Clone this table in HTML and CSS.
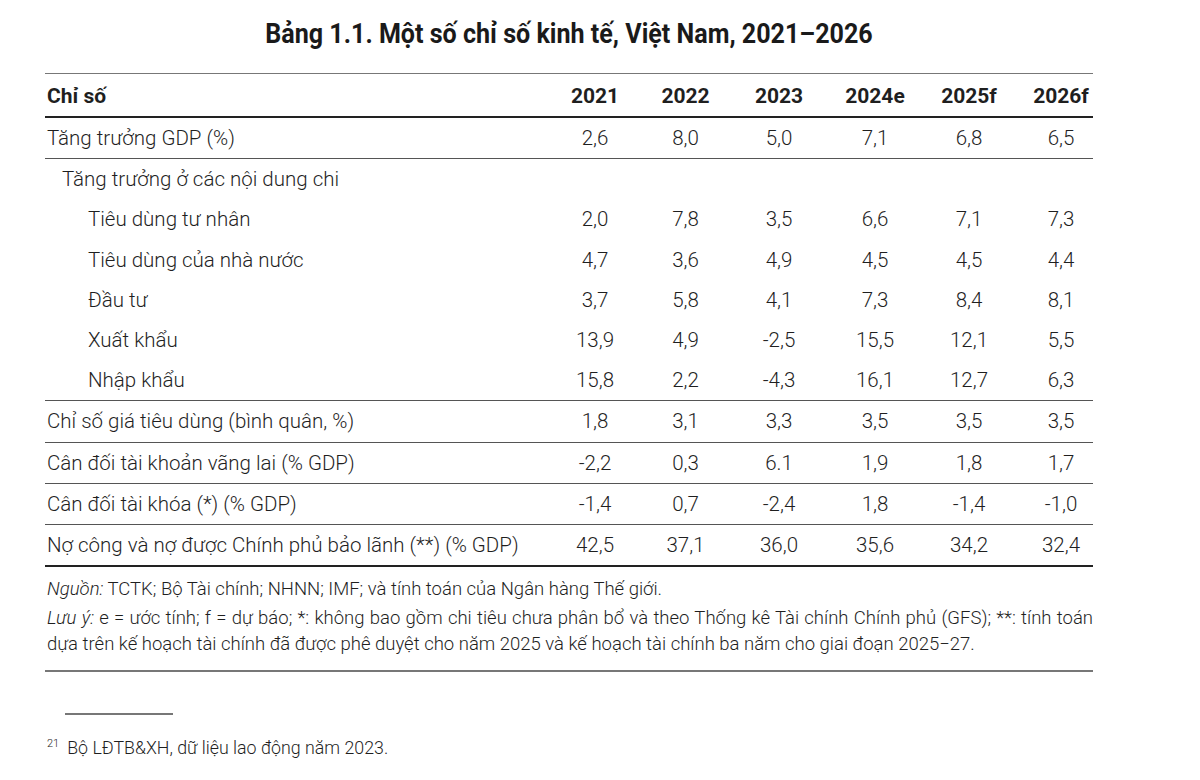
FILE: index.html
```html
<!DOCTYPE html>
<html lang="vi">
<head>
<meta charset="utf-8">
<link rel="stylesheet" href="styles.css">
</head>
<body>
<div class="page">
  <h1 class="title">Bảng 1.1. Một số chỉ số kinh tế, Việt Nam, 2021–2026</h1>
  <table class="data">
    <colgroup>
      <col class="c-label"><col class="c1"><col class="c2"><col class="c3"><col class="c4"><col class="c5"><col class="c6">
    </colgroup>
    <thead>
      <tr><th class="lbl">Chỉ số</th><th>2021</th><th>2022</th><th>2023</th><th>2024e</th><th>2025f</th><th class="last">2026f</th></tr>
    </thead>
    <tbody>
      <tr class="ruled"><td class="lbl">Tăng trưởng GDP (%)</td><td>2,6</td><td>8,0</td><td>5,0</td><td>7,1</td><td>6,8</td><td class="last">6,5</td></tr>
      <tr><td class="lbl ind1">Tăng trưởng ở các nội dung chi</td><td></td><td></td><td></td><td></td><td></td><td class="last"></td></tr>
      <tr><td class="lbl ind2">Tiêu dùng tư nhân</td><td>2,0</td><td>7,8</td><td>3,5</td><td>6,6</td><td>7,1</td><td class="last">7,3</td></tr>
      <tr><td class="lbl ind2">Tiêu dùng của nhà nước</td><td>4,7</td><td>3,6</td><td>4,9</td><td>4,5</td><td>4,5</td><td class="last">4,4</td></tr>
      <tr><td class="lbl ind2">Đầu tư</td><td>3,7</td><td>5,8</td><td>4,1</td><td>7,3</td><td>8,4</td><td class="last">8,1</td></tr>
      <tr><td class="lbl ind2">Xuất khẩu</td><td>13,9</td><td>4,9</td><td>-2,5</td><td>15,5</td><td>12,1</td><td class="last">5,5</td></tr>
      <tr class="ruled"><td class="lbl ind2">Nhập khẩu</td><td>15,8</td><td>2,2</td><td>-4,3</td><td>16,1</td><td>12,7</td><td class="last">6,3</td></tr>
      <tr class="ruled"><td class="lbl">Chỉ số giá tiêu dùng (bình quân, %)</td><td>1,8</td><td>3,1</td><td>3,3</td><td>3,5</td><td>3,5</td><td class="last">3,5</td></tr>
      <tr class="ruled"><td class="lbl">Cân đối tài khoản vãng lai (% GDP)</td><td>-2,2</td><td>0,3</td><td>6.1</td><td>1,9</td><td>1,8</td><td class="last">1,7</td></tr>
      <tr class="ruled"><td class="lbl">Cân đối tài khóa (*) (% GDP)</td><td>-1,4</td><td>0,7</td><td>-2,4</td><td>1,8</td><td>-1,4</td><td class="last">-1,0</td></tr>
      <tr class="final"><td class="lbl">Nợ công và nợ được Chính phủ bảo lãnh (**) (% GDP)</td><td>42,5</td><td>37,1</td><td>36,0</td><td>35,6</td><td>34,2</td><td class="last">32,4</td></tr>
    </tbody>
  </table>
  <div class="notes">
    <p><em>Nguồn:</em> TCTK; Bộ Tài chính; NHNN; IMF; và tính toán của Ngân hàng Thế giới.</p>
    <p><em>Lưu ý:</em> e = ước tính; f = dự báo; *: không bao gồm chi tiêu chưa phân bổ và theo Thống kê Tài chính Chính phủ (GFS); **: tính toán dựa trên kế hoạch tài chính đã được phê duyệt cho năm 2025 và kế hoạch tài chính ba năm cho giai đoạn 2025−27.</p>
  </div>
  <div class="fn-rule"></div>
  <p class="footnote"><sup>21</sup>Bộ LĐTB&amp;XH, dữ liệu lao động năm 2023.</p>
</div>
</body>
</html>
```

FILE: styles.css
```css
html, body {
  margin: 0;
  padding: 0;
  background: #ffffff;
}
body {
  font-family: Roboto, "Noto Sans", sans-serif;
  color: #1f1f1f;
}
.page {
  width: 1048px;
  margin-left: 45px;
  padding-top: 16px;
}
.title {
  margin: 0 0 21px 0;
  text-align: center;
  font-family: Roboto, sans-serif;
  font-weight: 700;
  font-size: 27.5px;
  line-height: 36px;
  color: #1a1a1a;
  transform: scaleX(0.912);
  transform-origin: 524px 50%;
}
.data {
  width: 100%;
  border-collapse: collapse;
  border-top: 1px solid #777;
  table-layout: fixed;
}
.c-label { width: 505px; }
.c1 { width: 90px; }
.c2 { width: 91px; }
.c3 { width: 96px; }
.c4 { width: 96px; }
.c5 { width: 92px; }
.c6 { width: 78px; }
.data th, .data td {
  padding: 0;
  text-align: center;
  font-size: 20.5px;
  height: 40.2px;
  white-space: nowrap;
}
.data th {
  font-weight: 700;
  font-size: 21px;
  height: 40px;
  padding-top: 2px;
  border-bottom: 2px solid #222;
}
.data td {
  font-weight: 300;
}
.data .last { padding-left: 14px; }
.data .lbl {
  text-align: left;
  padding-left: 2px;
}
.data .ind1 { padding-left: 17px; }
.data .ind2 { padding-left: 43px; }
.data tr.ruled td { border-bottom: 1px solid #555; }
.data tr.final td { border-bottom: 2px solid #222; }
.notes {
  margin-top: 10px;
  padding-bottom: 13px;
  border-bottom: 2px solid #777;
}
.notes p {
  margin: 0;
  padding-left: 2px;
  font-size: 18.5px;
  font-weight: 300;
  line-height: 25.5px;
  text-align: justify;
}
.notes p + p { margin-top: 3.5px; }
.notes em { font-style: italic; }
.fn-rule {
  width: 108px;
  height: 2px;
  background: #777;
  margin: 41px 0 0 20px;
}
.footnote {
  margin: 21px 0 0 0;
  padding-left: 2px;
  font-size: 17.8px;
  font-weight: 300;
  line-height: 24px;
}
.footnote sup {
  font-size: 11px;
  vertical-align: 7px;
  line-height: 0;
  margin-right: 8px;
}
```
